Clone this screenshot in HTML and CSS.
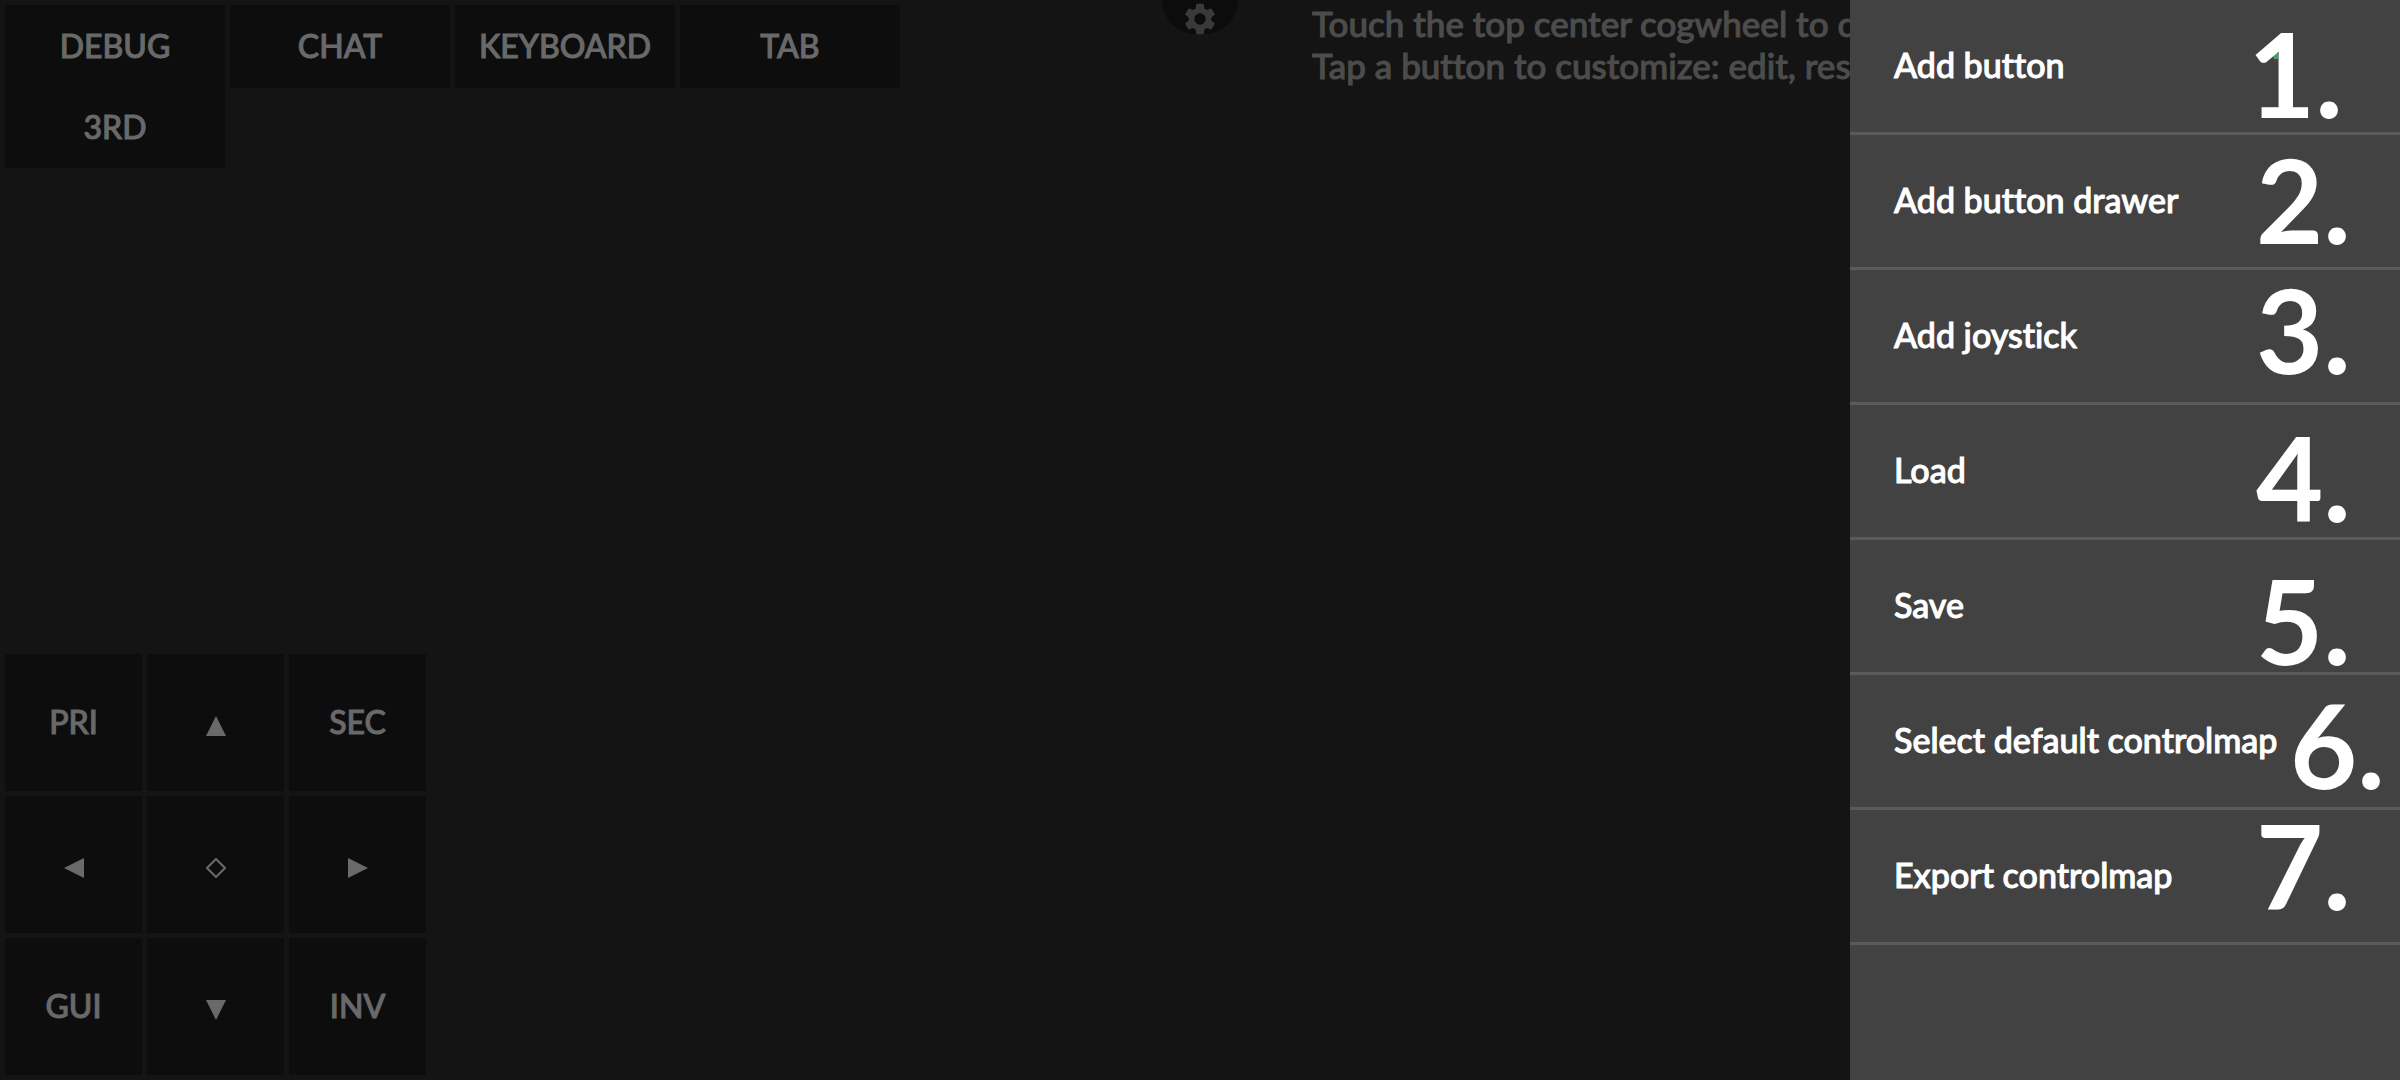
FILE: index.html
```html
<!DOCTYPE html>
<html lang="en">
<head>
<meta charset="utf-8">
<meta name="viewport" content="width=device-width, initial-scale=1">
<title>Control map editor</title>
<link rel="stylesheet" href="styles.css">
</head>
<body>
<main class="stage">
  <header class="top">
    <div class="keys">
      <button class="key" type="button">DEBUG</button>
      <button class="key" type="button">CHAT</button>
      <button class="key" type="button">KEYBOARD</button>
      <button class="key" type="button">TAB</button>
      <button class="key" type="button">3RD</button>
    </div>
    <button class="cog" type="button" aria-label="Settings">
      <svg class="cog-icon" viewBox="0 0 24 24" aria-hidden="true"><path d="M19.14 12.94c.04-.3.06-.61.06-.94 0-.32-.02-.64-.07-.94l2.03-1.58a.49.49 0 0 0 .12-.61l-1.92-3.32a.49.49 0 0 0-.59-.22l-2.39.96c-.5-.38-1.03-.7-1.62-.94l-.36-2.54a.48.48 0 0 0-.48-.41h-3.84a.48.48 0 0 0-.47.41l-.36 2.54c-.59.24-1.13.57-1.62.94l-2.39-.96a.49.49 0 0 0-.59.22L2.74 8.87a.48.48 0 0 0 .12.61l2.03 1.58c-.05.3-.09.63-.09.94s.02.64.07.94l-2.03 1.58a.49.49 0 0 0-.12.61l1.92 3.32c.12.22.37.29.59.22l2.39-.96c.5.38 1.03.7 1.62.94l.36 2.54c.05.24.24.41.48.41h3.84c.24 0 .44-.17.47-.41l.36-2.54c.59-.24 1.13-.56 1.62-.94l2.39.96c.22.08.47 0 .59-.22l1.92-3.32a.48.48 0 0 0-.12-.61zM12 15.6a3.6 3.6 0 1 1 0-7.2 3.6 3.6 0 0 1 0 7.2z"/></svg>
    </button>
    <p class="hint">Touch the top center cogwheel to c<br>Tap a button to customize: edit, res</p>
  </header>

  <div class="pad">
    <button class="key" type="button">PRI</button>
    <button class="key arrow" type="button" aria-label="Up"><svg viewBox="0 0 20 20"><path d="M10 0 20 20H0z"/></svg></button>
    <button class="key" type="button">SEC</button>
    <button class="key arrow" type="button" aria-label="Left"><svg viewBox="0 0 20 20"><path d="M0 10 20 0v20z"/></svg></button>
    <button class="key arrow" type="button" aria-label="Center"><svg class="hollow" viewBox="0 0 20 20"><path d="M10 1 19 10 10 19 1 10z"/></svg></button>
    <button class="key arrow" type="button" aria-label="Right"><svg viewBox="0 0 20 20"><path d="M20 10 0 20V0z"/></svg></button>
    <button class="key" type="button">GUI</button>
    <button class="key arrow" type="button" aria-label="Down"><svg viewBox="0 0 20 20"><path d="M10 20 0 0h20z"/></svg></button>
    <button class="key" type="button">INV</button>
  </div>
</main>

<nav class="drawer" aria-label="Editor menu">
  <button class="item" type="button">Add button</button>
  <button class="item" type="button">Add button drawer</button>
  <button class="item" type="button">Add joystick</button>
  <button class="item" type="button">Load</button>
  <button class="item" type="button">Save</button>
  <button class="item" type="button">Select default controlmap</button>
  <button class="item" type="button">Export controlmap</button>

  <svg class="speck" viewBox="0 0 6 14" aria-hidden="true"><path fill="#35a565" d="M0 3 6 0v9H2z"/><path fill="#6b3a34" d="M2 10h4v2H2z"/></svg>
  <span class="mark mark-1">1.</span>
  <span class="mark mark-2">2.</span>
  <span class="mark mark-3">3.</span>
  <span class="mark mark-4">4.</span>
  <span class="mark mark-5">5.</span>
  <span class="mark mark-6">6.</span>
  <span class="mark mark-7">7.</span>
</nav>
</body>
</html>
```
FILE: styles.css
```css
* {
  box-sizing: border-box;
}

body {
  margin: 0;
  background: #141414;
  color: #fff;
  font-family: Lato, "Open Sans", sans-serif;
  font-size: 34px;
  font-weight: 500;
  font-variant-ligatures: none;
  overflow: hidden;
}

button {
  margin: 0;
  padding: 0;
  border: 0;
  font: inherit;
  font-variant-ligatures: none;
  color: inherit;
  background: none;
}

/* A thin outline gives the labels their medium weight */
.key,
.hint,
.item {
  -webkit-text-stroke: 1px currentColor;
}

.stage {
  display: flex;
  flex-direction: column;
  justify-content: space-between;
  min-height: 100vh;
  padding-bottom: 5px;
}

/* Top bar: key buttons, cogwheel, hint */
.top {
  display: grid;
  grid-template-columns: minmax(0, 1fr) 76px minmax(0, 1fr);
  align-items: start;
}

.keys {
  display: grid;
  grid-template-columns: repeat(4, 220px);
  grid-template-rows: 83px 80px;
  column-gap: 5px;
  padding: 5px;
}

.key {
  display: flex;
  align-items: center;
  justify-content: center;
  padding-bottom: 3px;
  background: #0d0d0d;
  color: #696969;
  font-size: 32px;
}

.cog {
  display: flex;
  justify-content: center;
  height: 34px;
  border-radius: 0 0 38px 38px;
  background: #0c0c0c;
}

.cog-icon {
  width: 38px;
  height: 38px;
  fill: #393939;
}

.hint {
  margin: 0;
  padding: 2px 0 0 74px;
  color: #4c4c4c;
  font-size: 34px;
  line-height: 42px;
  white-space: nowrap;
}

/* Direction pad */
.pad {
  display: grid;
  grid-template-columns: repeat(3, 137px);
  grid-auto-rows: 137px;
  gap: 5px;
  padding-left: 5px;
}

.arrow {
  padding: 6px 0 0;
}

.arrow svg {
  width: 20px;
  height: 20px;
  fill: currentColor;
}

.arrow .hollow {
  fill: none;
  stroke: currentColor;
  stroke-width: 2;
}

.drawer {
  position: absolute;
  top: 0;
  right: 0;
  bottom: 0;
  display: flex;
  flex-direction: column;
  width: 550px;
  background: #424242;
}

.item {
  height: 135px;
  padding: 0 0 3px 44px;
  border-bottom: 3px solid #5a5a5a;
  text-align: left;
}

/* Numbered annotations placed freely over the drawer */
.mark {
  position: absolute;
  left: 406px;
  font-size: 116px;
  font-weight: 700;
  line-height: 116px;
}

.mark-1 { top: 16px; left: 398px; }
.mark-2 { top: 142px; }
.mark-3 { top: 272px; }
.mark-4 { top: 420px; }
.mark-5 { top: 563px; }
.mark-6 { top: 687px; left: 440px; }
.mark-7 { top: 808px; }

.speck {
  position: absolute;
  left: 422px;
  top: 50px;
  width: 6px;
  height: 14px;
}

.hint {
  font-size: 35px;
}
```
